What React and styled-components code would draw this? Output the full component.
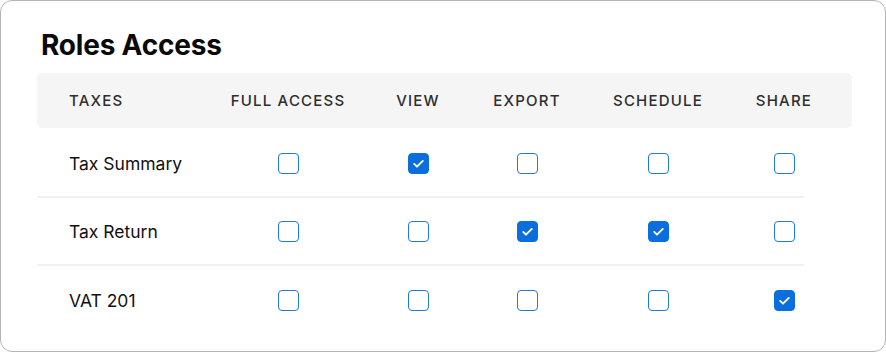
import React from 'react';
import styled, { createGlobalStyle } from 'styled-components';

const GlobalStyle = createGlobalStyle`
  html, body {
    margin: 0;
    padding: 0;
    background: #ffffff;
  }
  body {
    font-family: Inter, "Noto Sans", "Liberation Sans", sans-serif;
  }
`;

const columns = ['Full Access', 'View', 'Export', 'Schedule', 'Share'];

const rows = [
  { name: 'Tax Summary', access: [false, true, false, false, false] },
  { name: 'Tax Return', access: [false, false, true, true, false] },
  { name: 'VAT 201', access: [false, false, false, false, true] },
];

function Checkbox({ checked }) {
  return (
    <Box $checked={checked}>
      {checked && (
        <svg width="15" height="15" viewBox="0 0 14 14" fill="none">
          <path d="M3 7.4l2.6 2.5L11 4.6" stroke="#fff" strokeWidth="1.8" strokeLinecap="round" strokeLinejoin="round" />
        </svg>
      )}
    </Box>
  );
}

function App() {
  return (
    <>
      <GlobalStyle />
      <Card>
        <Title>Roles Access</Title>
        <HeaderRow>
          <HeadCell $first>Taxes</HeadCell>
          {columns.map((c) => (
            <HeadCell key={c}>{c}</HeadCell>
          ))}
        </HeaderRow>
        {rows.map((r, i) => (
          <Row key={r.name} $last={i === rows.length - 1}>
            <NameCell>{r.name}</NameCell>
            {r.access.map((on, j) => (
              <Cell key={j}>
                <Checkbox checked={on} />
              </Cell>
            ))}
          </Row>
        ))}
      </Card>
    </>
  );
}

export default App;

const Card = styled.div`
  box-sizing: border-box;
  width: 886px;
  height: 352px;
  border: 1px solid #b4b4b4;
  border-radius: 12px;
  padding: 28px 33px 0 36px;
  background: #fff;
`;

const Title = styled.h1`
  margin: 0 0 12px 4px;
  font-size: 28px;
  line-height: 32px;
  font-weight: 700;
  color: #0a0a0a;
  letter-spacing: -0.2px;
`;

const grid = `
  display: grid;
  grid-template-columns: 191px 120px 140px 78px 184px 68px;
  align-items: center;
`;

const HeaderRow = styled.div`
  ${grid}
  height: 55px;
  margin-bottom: 2px;
  background: #f5f5f5;
  border-radius: 5px;
`;

const HeadCell = styled.div`
  font-size: 15px;
  font-weight: 500;
  letter-spacing: 1.2px;
  text-transform: uppercase;
  color: #2e2e2e;
  text-align: ${(p) => (p.$first ? 'left' : 'center')};
  padding-left: ${(p) => (p.$first ? '32px' : '0')};
  white-space: nowrap;
`;

const Row = styled.div`
  ${grid}
  box-sizing: border-box;
  width: 767px;
  height: 68px;
  border-bottom: ${(p) => (p.$last ? 'none' : '2px solid #f1f1f1')};
`;

const NameCell = styled.div`
  padding-left: 32px;
  font-size: 17.5px;
  color: #111;
`;

const Cell = styled.div`
  display: flex;
  justify-content: center;
`;

const Box = styled.span`
  box-sizing: border-box;
  width: 21px;
  height: 21px;
  border-radius: 4px;
  display: flex;
  align-items: center;
  justify-content: center;
  border: 1.5px solid #1f7ae0;
  background: ${(p) => (p.$checked ? '#0a6fdc' : '#fff')};
  border-color: ${(p) => (p.$checked ? '#0a6fdc' : '#1f7ae0')};
`;
